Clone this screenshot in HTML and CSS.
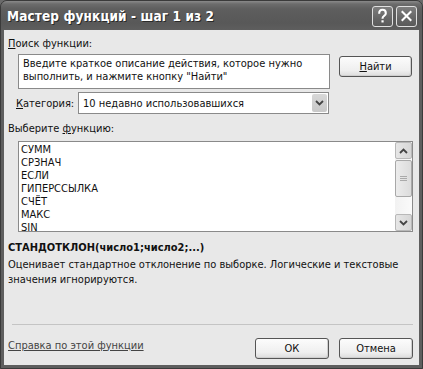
FILE: index.html
```html
<!DOCTYPE html>
<html lang="ru">
<head>
<meta charset="utf-8">
<link rel="stylesheet" href="styles.css">
</head>
<body>
<div class="window">
  <div class="titlebar">
    <span class="title">Мастер функций - шаг 1 из 2</span>
    <div class="tbtns">
      <div class="tbtn">
        <svg width="20" height="20" viewBox="0 0 20 20"><path d="M6.5 7.5 Q6.5 3.5 10 3.5 Q13.5 3.5 13.5 7 Q13.5 9 11.5 10 Q10 11 10 13" fill="none" stroke="#fff" stroke-width="2.2"/><rect x="8.9" y="14.5" width="2.3" height="2.3" fill="#fff"/></svg>
      </div>
      <div class="tbtn">
        <svg width="20" height="20" viewBox="0 0 20 20"><path d="M5 5 L15 15 M15 5 L5 15" stroke="#fff" stroke-width="2.2"/></svg>
      </div>
    </div>
  </div>
  <div class="client">
    <div class="label"><u>П</u>оиск функции:</div>
    <div class="search-row">
      <div class="searchbox">Введите краткое описание действия, которое нужно выполнить, и нажмите кнопку "Найти"</div>
      <div class="btn find"><u>Н</u>айти</div>
    </div>
    <div class="cat-row">
      <span class="cat-label"><u>К</u>атегория:</span>
      <div class="select">
        <span>10 недавно использовавшихся</span>
        <div class="drop">
          <svg width="9" height="6" viewBox="0 0 9 6"><path d="M1 1 L4.5 4.5 L8 1" fill="none" stroke="#444" stroke-width="1.8"/></svg>
        </div>
      </div>
    </div>
    <div class="label fn-label">Выберите <u>ф</u>ункцию:</div>
    <div class="list">
      <div class="items">
        <div>СУММ</div>
        <div>СРЗНАЧ</div>
        <div>ЕСЛИ</div>
        <div>ГИПЕРССЫЛКА</div>
        <div>СЧЁТ</div>
        <div>МАКС</div>
        <div>SIN</div>
      </div>
      <div class="scroll">
        <div class="sbtn">
          <svg width="9" height="6" viewBox="0 0 9 6"><path d="M1 5 L4.5 1.5 L8 5" fill="none" stroke="#444" stroke-width="1.8"/></svg>
        </div>
        <div class="thumb">
          <svg width="7" height="7" viewBox="0 0 7 7"><path d="M0 1.5 H7 M0 3.5 H7 M0 5.5 H7" stroke="#aaa" stroke-width="1"/></svg>
        </div>
        <div class="track"></div>
        <div class="sbtn">
          <svg width="9" height="6" viewBox="0 0 9 6"><path d="M1 1 L4.5 4.5 L8 1" fill="none" stroke="#444" stroke-width="1.8"/></svg>
        </div>
      </div>
    </div>
    <div class="sig">СТАНДОТКЛОН(число1;число2;...)</div>
    <div class="desc">Оценивает стандартное отклонение по выборке. Логические и текстовые значения игнорируются.</div>
    <div class="spacer"></div>
    <div class="sep"></div>
    <div class="bottom">
      <a class="help">Справка по этой функции</a>
      <div class="btns">
        <div class="btn">ОК</div>
        <div class="btn">Отмена</div>
      </div>
    </div>
  </div>
</div>
</body>
</html>
```

FILE: styles.css
```css
html, body {
  margin: 0;
  padding: 0;
  background: #6a6a6a;
}
body {
  width: 423px;
  height: 369px;
  font-family: "DejaVu Sans Condensed", "DejaVu Sans", sans-serif;
  font-size: 11px;
  color: #111;
}
.window {
  width: 423px;
  height: 369px;
  box-sizing: border-box;
  background: #5e5e5e;
  border-radius: 7px 7px 0 0;
  display: flex;
  flex-direction: column;
  border: 1px solid #3a3a3a;
}
.titlebar {
  height: 29px;
  flex: none;
  display: flex;
  align-items: center;
  justify-content: space-between;
  padding: 0 5px 0 6px;
  background: linear-gradient(#8a8a8a 0, #6c6c6c 3px, #5e5e5e 8px, #585858 22px, #5e5e5e 29px);
  border-radius: 6px 6px 0 0;
}
.title {
  color: #fff;
  font-weight: bold;
  font-size: 13.5px;
  letter-spacing: 0.1px;
  text-shadow: 1px 1px 0 #2a2a2a;
  font-family: "DejaVu Sans Condensed", "DejaVu Sans", sans-serif;
  margin-top: 1px;
}
.tbtns {
  display: flex;
  gap: 3px;
  margin-top: 1px;
}
.tbtn {
  width: 19px;
  height: 19px;
  border: 1px solid #e0e0e0;
  border-radius: 3px;
  background: linear-gradient(#7e7e7e, #666 60%, #5a5a5a);
  display: flex;
  align-items: center;
  justify-content: center;
}
.client {
  flex: 1;
  margin: 0 3px 3px;
  background: #e8e8e8;
  display: flex;
  flex-direction: column;
  padding: 7px 6px 0 4px;
}
.label {
  height: 13px;
  line-height: 13px;
}
u { text-decoration: underline; text-underline-offset: 1px; }
.search-row {
  display: flex;
  margin-top: 4px;
  margin-left: 10px;
  align-items: flex-start;
}
.searchbox {
  width: 302px;
  height: 31px;
  border: 1px solid #8a8a8a;
  background: #fff;
  padding: 2px 4px 0;
  line-height: 13px;
}
.btn {
  width: 71px;
  height: 19px;
  border: 1px solid #555;
  border-radius: 3px;
  background: linear-gradient(#fcfcfc, #efefef 70%, #dcdcdc);
  box-shadow: inset -1px -1px 0 #cfcfcf;
  display: flex;
  align-items: center;
  justify-content: center;
  color: #111;
}
.find {
  margin-left: 9px;
  margin-top: 2px;
}
.cat-row {
  display: flex;
  align-items: center;
  margin-top: 3px;
  margin-left: 8px;
}
.cat-label {
  width: 62px;
  flex: none;
  white-space: nowrap;
}
.select {
  width: 245px;
  height: 20px;
  border: 1px solid #8a8a8a;
  background: #fff;
  display: flex;
  align-items: center;
  justify-content: space-between;
  padding-left: 4px;
  box-sizing: content-box;
}
.drop {
  width: 15px;
  height: 18px;
  margin-right: 1px;
  background: linear-gradient(#d8d8d8, #c8c8c8);
  border-radius: 2px;
  display: flex;
  align-items: center;
  justify-content: center;
}
.fn-label {
  margin-top: 8px;
}
.list {
  margin-top: 6px;
  margin-left: 10px;
  width: 393px;
  height: 89px;
  border: 1px solid #8a8a8a;
  background: #fff;
  display: flex;
}
.items {
  flex: 1;
  padding: 1px 0 0 2px;
}
.items div {
  height: 13px;
  line-height: 13px;
}
.scroll {
  width: 17px;
  display: flex;
  flex-direction: column;
  background: linear-gradient(90deg, #f2f2f2, #fafafa);
}
.sbtn {
  height: 15px;
  border: 1px solid #b8b8b8;
  border-radius: 2px;
  background: linear-gradient(90deg, #e6e6e6, #d6d6d6);
  display: flex;
  align-items: center;
  justify-content: center;
}
.thumb {
  height: 35px;
  margin-top: 1px;
  border: 1px solid #a8a8a8;
  border-radius: 2px;
  background: linear-gradient(90deg, #ececec, #dcdcdc);
  display: flex;
  align-items: center;
  justify-content: center;
}
.track { flex: 1; }
.sig {
  margin-top: 9px;
  font-weight: bold;
  font-size: 11px;
  line-height: 13px;
  height: 13px;
}
.desc {
  margin-top: 3px;
  line-height: 15px;
  width: 405px;
}
.spacer { flex: 1; }
.sep {
  height: 1px;
  background: #c4c4c4;
  margin: 0 0 0 4px;
}
.bottom {
  display: flex;
  justify-content: space-between;
  align-items: center;
  height: 40px;
  padding-bottom: 0;
}
.help {
  color: #444;
  text-decoration: underline;
  margin-top: 0;
}
.btns {
  display: flex;
  gap: 10px;
  margin-top: 6px;
}
.btns .btn {
  width: 72px;
}
```
